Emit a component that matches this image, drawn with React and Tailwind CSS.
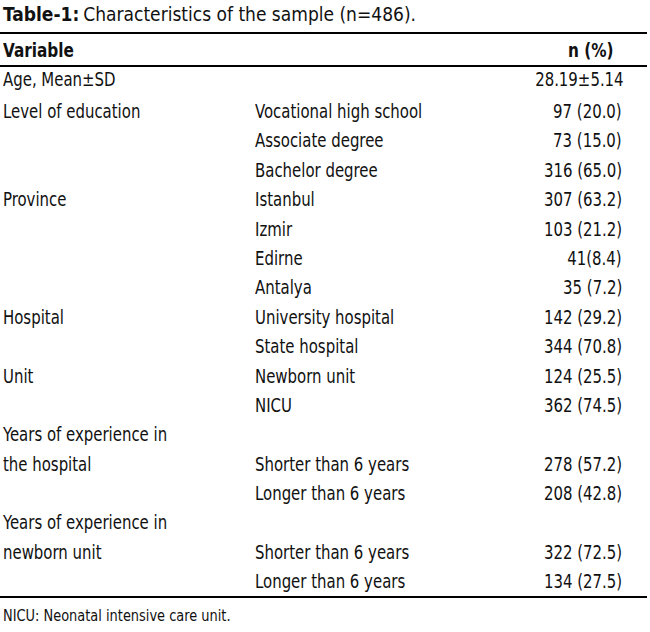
import React from "react";

const rows = [
  ["Level of education", "Vocational high school", "97 (20.0)"],
  ["", "Associate degree", "73 (15.0)"],
  ["", "Bachelor degree", "316 (65.0)"],
  ["Province", "Istanbul", "307 (63.2)"],
  ["", "Izmir", "103 (21.2)"],
  ["", "Edirne", "41(8.4)"],
  ["", "Antalya", "35 (7.2)"],
  ["Hospital", "University hospital", "142 (29.2)"],
  ["", "State hospital", "344 (70.8)"],
  ["Unit", "Newborn unit", "124 (25.5)"],
  ["", "NICU", "362 (74.5)"],
  ["Years of experience in", "", ""],
  ["the hospital", "Shorter than 6 years", "278 (57.2)"],
  ["", "Longer than 6 years", "208 (42.8)"],
  ["Years of experience in", "", ""],
  ["newborn unit", "Shorter than 6 years", "322 (72.5)"],
  ["", "Longer than 6 years", "134 (27.5)"],
];

function L({ children }) {
  return (
    <span className="inline-block whitespace-nowrap origin-left scale-x-[0.83]">{children}</span>
  );
}

function R({ children }) {
  return (
    <span className="inline-block whitespace-nowrap origin-right scale-x-[0.83]">{children}</span>
  );
}

export default function App() {
  return (
    <div className="w-[650px] h-[632px] bg-white text-[#111] font-['DejaVu_Sans_Condensed','Liberation_Sans',sans-serif] text-[20px] leading-none">
      <div className="h-[32px] pl-[3px] flex items-center pb-[4px] whitespace-nowrap text-[19px]">
        <span className="font-bold">Table-1:</span>
        <span className="ml-[4px]">Characteristics of the sample (n=486).</span>
      </div>
      <div className="w-[647px] border-t-2 border-b-2 border-black">
        <div className="h-[31px] flex items-center font-bold text-[20px]">
          <div className="pl-[3px] flex-1">
            <span className="inline-block whitespace-nowrap origin-left scale-x-[0.85]">Variable</span>
          </div>
          <div className="pr-[33px] text-right">
            <span className="inline-block whitespace-nowrap origin-right scale-x-[0.85]">n (%)</span>
          </div>
        </div>
      </div>
      <div className="w-[647px] border-b-2 border-black">
        <div className="h-[29.3px] pb-[5px] grid grid-cols-[255px_1fr_130px] items-center">
          <div className="pl-[3px]"><L>Age, Mean±SD</L></div>
          <div></div>
          <div className="text-right pr-[25px]"><R>28.19±5.14</R></div>
        </div>
        {rows.map((r, i) => (
          <div key={i} className="h-[29.4px] grid grid-cols-[255px_1fr_130px] items-center">
            <div className="pl-[3px]">{r[0] && <L>{r[0]}</L>}</div>
            <div>{r[1] && <L>{r[1]}</L>}</div>
            <div className="text-right pr-[25px]">{r[2] && <R>{r[2]}</R>}</div>
          </div>
        ))}
      </div>
      <div className="pl-[3px] pt-[10px] text-[16px]">
        <span className="inline-block whitespace-nowrap origin-left scale-x-[0.9]">NICU: Neonatal intensive care unit.</span>
      </div>
    </div>
  );
}
